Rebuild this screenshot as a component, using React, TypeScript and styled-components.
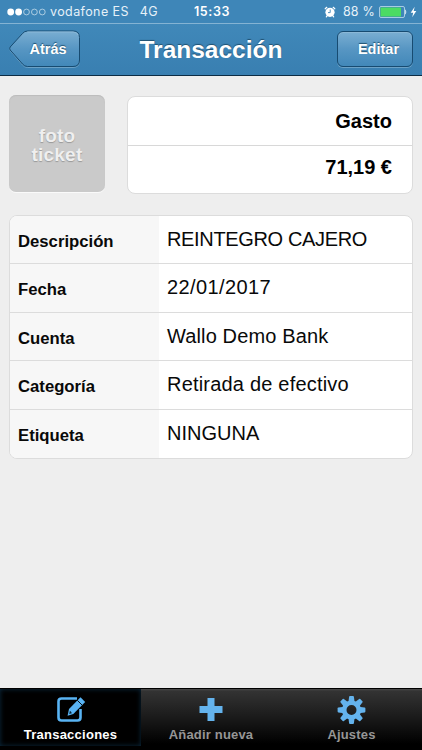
import React from "react";
import styled, { createGlobalStyle } from "styled-components";

const Global = createGlobalStyle`
  * { box-sizing: border-box; }
  html, body { margin: 0; padding: 0; background: #eeeeee; }
  body { font-family: "Liberation Sans", Arial, sans-serif; overflow: hidden; }
`;

const Screen = styled.div`
  width: 422px;
  height: 750px;
  display: flex;
  flex-direction: column;
  background: #eeeeee;
`;

const StatusBar = styled.header`
  height: 23px;
  flex: none;
  display: grid;
  grid-template-columns: 1fr auto 1fr;
  align-items: center;
  padding: 1px 5px 0 7px;
  background: #3e86b8;
  color: #ffffff;
  font: 400 12.5px/22px Inter, sans-serif;
`;

const StatusGroup = styled.div<{ $end?: boolean }>`
  display: flex;
  align-items: center;
  justify-content: ${(p) => (p.$end ? "flex-end" : "flex-start")};
  white-space: nowrap;
`;

const Carrier = styled.span`
  margin-left: 4px;
  letter-spacing: 0.4px;
  color: #e6f1f8;
`;

const Network = styled.span`
  margin-left: 11px;
  letter-spacing: 0.3px;
  color: #e6f1f8;
`;

const Clock = styled.span`
  font-weight: 600;
  letter-spacing: 0.6px;
`;

const Percent = styled.span`
  margin: 0 4px 0 7px;
  letter-spacing: 0.2px;
  color: #e6f1f8;
`;

const NavBar = styled.nav`
  height: 53px;
  flex: none;
  display: grid;
  grid-template-columns: 80px 1fr 85px;
  align-items: start;
  padding: 7px 9px 0 9px;
  border-top: 1px solid #84b3d3;
  border-bottom: 1px solid #0c2c44;
  background: linear-gradient(#4088b9, #397fb1);
`;

const Title = styled.h1`
  margin: 0;
  padding-left: 5px;
  color: #ffffff;
  text-align: center;
  font-size: 24.5px;
  font-weight: 700;
  line-height: 37px;
  text-shadow: 0 -1px 1px #205070;
`;

const BackButton = styled.button`
  position: relative;
  width: 72px;
  height: 38px;
  margin-top: -1px;
  padding: 0 0 0 6px;
  border: 0;
  background: none;
  color: #ffffff;
  font: 700 14.5px/38px "Liberation Sans", Arial, sans-serif;
  text-shadow: 0 -1px 1px #205070;
`;

const BackShape = styled.svg`
  position: absolute;
  inset: 0;
`;

const ButtonLabel = styled.span`
  position: relative;
`;

const EditButton = styled.button`
  width: 76px;
  height: 36px;
  margin-left: 9px;
  justify-self: start;
  padding: 0 0 0 7px;
  border: 1px solid #174b71;
  border-radius: 6px;
  background: linear-gradient(#7aaed2, #5796c3 50%, #4288b9);
  box-shadow: 0 1px 0 #6ca1c5, inset 0 1px 0 #8bb8d7;
  color: #ffffff;
  font: 700 14.5px/34px "Liberation Sans", Arial, sans-serif;
  text-shadow: 0 -1px 1px #205070;
`;

const Content = styled.main`
  flex: 1;
  padding: 19px 9px 0;
`;

const Summary = styled.section`
  display: flex;
  justify-content: space-between;
  height: 120px;
`;

const PhotoBox = styled.div`
  width: 96px;
  height: 97px;
  padding-top: 31px;
  border-radius: 7px;
  background: #cacaca;
  box-shadow: inset 0 1px 1px #bcbcbc, 0 1px 0 #fafafa;
  color: #efefef;
  text-align: center;
  font-size: 19px;
  font-weight: 700;
  text-shadow: 0 1px 1px #999999;
`;

const PhotoLine = styled.div`
  height: 19px;
  line-height: 19px;
  letter-spacing: 0.2px;
`;

const AmountCard = styled.div`
  width: 286px;
  height: 98px;
  margin-top: 1px;
  border: 1px solid #dcdcdc;
  border-radius: 8px;
  background: #ffffff;
`;

const AmountRow = styled.div<{ $divided?: boolean }>`
  height: ${(p) => (p.$divided ? "49px" : "47px")};
  padding-right: 20px;
  border-bottom: ${(p) => (p.$divided ? "1px solid #d8d8d8" : "0")};
  color: #000000;
  text-align: right;
  font-size: 20px;
  font-weight: 700;
  line-height: ${(p) => (p.$divided ? "49px" : "43px")};
`;

const Details = styled.dl`
  width: 404px;
  height: 244px;
  margin: 0;
  display: grid;
  grid-template-rows: repeat(5, minmax(0, 1fr));
  border: 1px solid #dcdcdc;
  border-radius: 8px;
  overflow: hidden;
  background: #ffffff;
`;

const DetailRow = styled.div`
  display: grid;
  grid-template-columns: 149px 1fr;
  grid-template-rows: 100%;
  &:not(:last-child) { border-bottom: 1px solid #dcdcdc; }
`;

const Term = styled.dt`
  padding-left: 8px;
  background: #f7f7f7;
  color: #090909;
  font-size: 16.7px;
  font-weight: 700;
  line-height: 51px;
`;

const Value = styled.dd<{ $spacing: number }>`
  margin: 0;
  padding-left: 8px;
  color: #090909;
  font-size: 20px;
  line-height: 47px;
  letter-spacing: ${(p) => p.$spacing}px;
  white-space: nowrap;
`;

const TabBar = styled.footer`
  height: 62px;
  flex: none;
  display: grid;
  grid-template-columns: 141px 140px 141px;
  border-top: 1px solid #000000;
  background: linear-gradient(#4b4b4b 0, #333333 2px, #1b1b1b 45%, #000000 90%);
`;

const Tab = styled.button<{ $active?: boolean }>`
  height: 57px;
  display: flex;
  flex-direction: column;
  align-items: center;
  padding: 6px 0 0;
  border: 0;
  background: ${(p) => (p.$active ? "#000000" : "transparent")};
  box-shadow: ${(p) => (p.$active ? "inset 0 0 5px #0b2b40" : "none")};
  color: ${(p) => (p.$active ? "#ffffff" : "#969696")};
  font: 700 13px/16px "Liberation Sans", Arial, sans-serif;
  letter-spacing: ${(p) => (p.$active ? "0.25px" : "0.18px")};
`;

const TabIcon = styled.svg`
  width: 30px;
  height: 30px;
  margin-bottom: 2px;
`;

const details = [
  { term: "Descripción", value: "REINTEGRO CAJERO", spacing: -0.35 },
  { term: "Fecha", value: "22/01/2017", spacing: 0.4 },
  { term: "Cuenta", value: "Wallo Demo Bank", spacing: 0.13 },
  { term: "Categoría", value: "Retirada de efectivo", spacing: 0.2 },
  { term: "Etiqueta", value: "NINGUNA", spacing: 0 },
];

const SignalDots = () => (
  <svg width="39" height="8" viewBox="0 0 39 8">
    {[0, 1, 2, 3, 4].map((i) => (
      <circle key={i} cx={3.7 + i * 7.9} cy="4" r={i < 2 ? 3.4 : 2.9}
        fill={i < 2 ? "#fff" : "none"} stroke={i < 2 ? "none" : "#c4dceb"} strokeWidth="0.8" />
    ))}
  </svg>
);

const AlarmIcon = () => (
  <svg width="12" height="12" viewBox="0 0 12 12">
    <circle cx="6" cy="6.3" r="4.6" fill="#fff" />
    <path d="M1.2 2.8 2.8 1.3M10.8 2.8 9.200 1.300M3 10l-.7.8M9 10l.7.8" stroke="#fff" strokeWidth="1.2" strokeLinecap="round" />
    <path d="M6.2 3.500v3.100H4" fill="none" stroke="#3e86b8" strokeWidth="0.9" />
  </svg>
);

const BatteryIcon = () => (
  <svg width="28" height="12" viewBox="0 0 28 12">
    <rect x=".5" y=".5" width="25" height="11" rx="1.5" fill="none" stroke="#a8cce3" />
    <rect x="1.5" y="1.5" width="20.5" height="9" rx=".5" fill="#4bdb63" />
    <path d="M26.2 3.8h.6q1 2.2 0 4.4h-.6z" fill="#e1eff7" />
  </svg>
);

const Bolt = styled.svg`
  margin-left: 3px;
`;

const gearAngles = Array.from({ length: 8 }, (_, i) => i * 45);

export default function App() {
  return (
    <>
      <Global />
      <Screen>
        <StatusBar>
          <StatusGroup>
            <SignalDots />
            <Carrier>vodafone ES</Carrier>
            <Network>4G</Network>
          </StatusGroup>
          <Clock>15:33</Clock>
          <StatusGroup $end>
            <AlarmIcon />
            <Percent>88 %</Percent>
            <BatteryIcon />
            <Bolt width="7" height="12" viewBox="0 0 7 12">
              <path d="M4.7.8.7 6.7h2.5l-1 4.5 4.1-6.1H3.7z" fill="#fff" />
            </Bolt>
          </StatusGroup>
        </StatusBar>
        <NavBar>
          <BackButton>
            <BackShape width="72" height="38" viewBox="0 0 72 38">
              <defs>
                <linearGradient id="backFill" x2="0" y2="1">
                  <stop stopColor="#7aaed2" />
                  <stop offset=".5" stopColor="#5796c3" />
                  <stop offset="1" stopColor="#4288b9" />
                </linearGradient>
              </defs>
              <path d="M18.5 2H64q6.5 0 6.5 6.5V31q0 6.500-6.500 6.500H18.500Q15.500 37.500 13.500 35L1.500 21q-1-1.500 0-3L13.500 4.500Q15.500 2 18.500 2Z" fill="none" stroke="#6ca1c5" />
              <path d="M18.5 1H64q6.5 0 6.5 6.5V30q0 6.500-6.500 6.500H18.500Q15.500 36.500 13.500 34L1.200 20q-1-1.500 0-3L13.500 3.500Q15.500 1 18.500 1Z" fill="url(#backFill)" stroke="#174b71" />
              <path d="M18.5 2H64q4 0 5 3" fill="none" stroke="#8bb8d7" />
            </BackShape>
            <ButtonLabel>Atrás</ButtonLabel>
          </BackButton>
          <Title>Transacción</Title>
          <EditButton>Editar</EditButton>
        </NavBar>
        <Content>
          <Summary>
            <PhotoBox>
              <PhotoLine>foto</PhotoLine>
              <PhotoLine>ticket</PhotoLine>
            </PhotoBox>
            <AmountCard>
              <AmountRow $divided>Gasto</AmountRow>
              <AmountRow>71,19 €</AmountRow>
            </AmountCard>
          </Summary>
          <Details>
            {details.map((d) => (
              <DetailRow key={d.term}>
                <Term>{d.term}</Term>
                <Value $spacing={d.spacing}>{d.value}</Value>
              </DetailRow>
            ))}
          </Details>
        </Content>
        <TabBar>
          <Tab $active>
            <TabIcon viewBox="0 0 30 30">
              <path d="M21 3.500H5.500Q2.500 3.500 2.500 6.500V22.500Q2.500 25.500 5.500 25.500H21.500Q24.500 25.500 24.500 22.500V14" fill="none" stroke="#59b4f4" strokeWidth="2.6" />
              <path d="M24.500 2.300 29.200 7 17.300 19 11.600 20.800 13 14Z" fill="#59b4f4" stroke="#000" strokeWidth="1.4" paintOrder="stroke" />
              <path d="m21.300 5.300 4.800 4.800" stroke="#000" strokeWidth=".9" />
              <path d="m13.900 15.800 1.100 1 .9 1.500-2.700.8z" fill="#0b2436" />
            </TabIcon>
            Transacciones
          </Tab>
          <Tab>
            <TabIcon viewBox="0 0 30 30">
              <path d="M11.500 3h7v8h8v7h-8v8h-7v-8h-8v-7h8z" fill="#64b3ed" />
            </TabIcon>
            Añadir nueva
          </Tab>
          <Tab>
            <TabIcon viewBox="0 0 30 30">
              <g fill="#64b3ed">
                {gearAngles.map((a) => (
                  <path key={a} d="M11.300 8 12.100 1.800Q12.200 1.100 13 1.100h3q.8 0 .9.700L17.700 8z" transform={`rotate(${a} 14.500 15)`} />
                ))}
                <circle cx="14.500" cy="15" r="7.300" fill="none" stroke="#64b3ed" strokeWidth="4.600" />
              </g>
            </TabIcon>
            Ajustes
          </Tab>
        </TabBar>
      </Screen>
    </>
  );
}
